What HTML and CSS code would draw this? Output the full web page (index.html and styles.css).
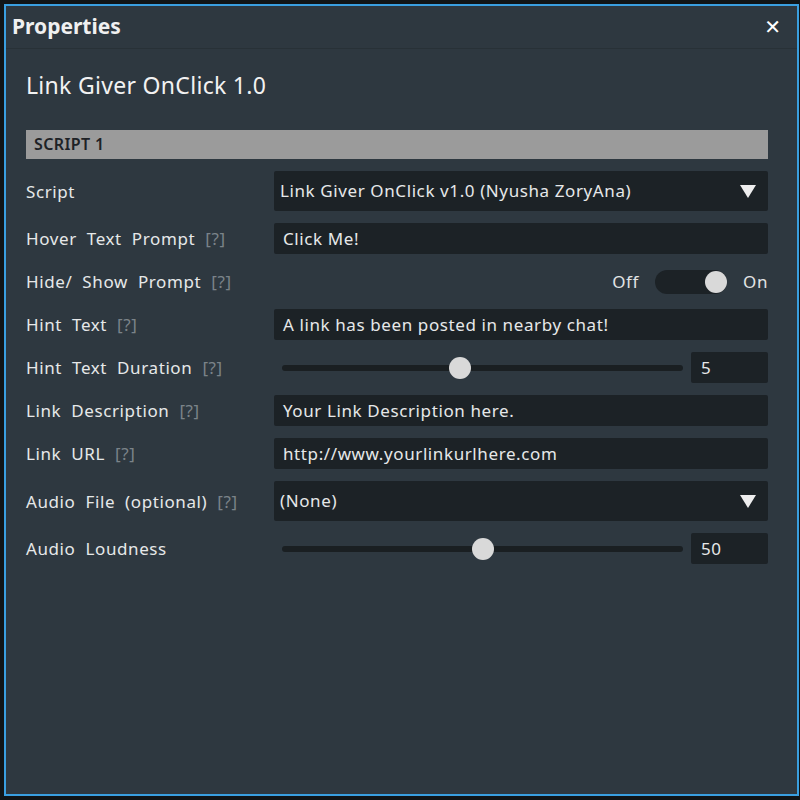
FILE: index.html
```html
<!DOCTYPE html>
<html lang="en">
<head>
    <meta charset="UTF-8">
    <title>Properties</title>
    <link rel="stylesheet" href="styles.css">
</head>
<body>
    <div class="window">
        <div class="title-bar">
            <span class="title">Properties</span>
            <span class="close">&#x2715;</span>
        </div>
        <div class="content">
            <h1 class="object-name">Link Giver OnClick 1.0</h1>
            <div class="section-head">SCRIPT 1</div>

            <div class="props">
                <div class="label">Script</div>
                <div class="field dropdown tall">
                    <span>Link Giver OnClick v1.0 (Nyusha ZoryAna)</span>
                    <span class="arrow"></span>
                </div>

                <div class="label">Hover Text Prompt <span class="help">[?]</span></div>
                <div class="field">Click Me!</div>

                <div class="label">Hide/ Show Prompt <span class="help">[?]</span></div>
                <div class="toggle-row">
                    <span>Off</span>
                    <div class="toggle"><div class="toggle-knob"></div></div>
                    <span>On</span>
                </div>

                <div class="label">Hint Text <span class="help">[?]</span></div>
                <div class="field">A link has been posted in nearby chat!</div>

                <div class="label">Hint Text Duration <span class="help">[?]</span></div>
                <div class="slider-row">
                    <div class="slider">
                        <div class="track"></div>
                        <div class="knob" style="left: 44.4%"></div>
                    </div>
                    <div class="field value">5</div>
                </div>

                <div class="label">Link Description <span class="help">[?]</span></div>
                <div class="field">Your Link Description here.</div>

                <div class="label">Link URL <span class="help">[?]</span></div>
                <div class="field">http://www.yourlinkurlhere.com</div>

                <div class="label">Audio File (optional) <span class="help">[?]</span></div>
                <div class="field dropdown tall">
                    <span>(None)</span>
                    <span class="arrow"></span>
                </div>

                <div class="label">Audio Loudness</div>
                <div class="slider-row">
                    <div class="slider">
                        <div class="track"></div>
                        <div class="knob" style="left: 50%"></div>
                    </div>
                    <div class="field value">50</div>
                </div>
            </div>
        </div>
    </div>
</body>
</html>
```

FILE: styles.css
```css
html, body {
    height: 100%;
}
body {
    margin: 0;
    background-color: #111517;
    font-family: "Noto Sans", "DejaVu Sans", sans-serif;
    color: #e2e4e5;
    box-sizing: border-box;
    padding: 4px 1px 4px 4px;
}
.window {
    height: 100%;
    box-sizing: border-box;
    border: 2px solid #3a9fe0;
    background-color: #2e3840;
    display: flex;
    flex-direction: column;
}
.title-bar {
    display: flex;
    justify-content: space-between;
    align-items: center;
    height: 40px;
    padding: 0 16px 2px 6px;
    border-bottom: 1px solid #283137;
}
.title {
    font-size: 21px;
    font-weight: bold;
    color: #f0f0f0;
}
.close {
    font-size: 20px;
    font-weight: bold;
    color: #ffffff;
}
.content {
    padding: 0 29px 0 20px;
}
.object-name {
    margin: 20px 0 29px 0;
    font-size: 23px;
    font-weight: normal;
    letter-spacing: 0.3px;
    color: #f2f2f2;
    line-height: 32px;
}
.section-head {
    height: 29px;
    line-height: 29px;
    background-color: #9b9b9b;
    color: #1e2226;
    font-size: 16px;
    font-weight: 600;
    letter-spacing: 0.4px;
    padding-left: 8px;
    margin-bottom: 12px;
}
.props {
    display: grid;
    grid-template-columns: 248px 1fr;
    row-gap: 12px;
    align-items: center;
}
.label {
    font-size: 17px;
    letter-spacing: 0.6px;
    word-spacing: 5px;
    color: #e6e8e9;
}
.help {
    color: #7b8389;
}
.field {
    height: 31px;
    line-height: 31px;
    background-color: #1c2226;
    border-radius: 2px;
    padding-left: 9px;
    font-size: 17px;
    letter-spacing: 0.6px;
    color: #e6e8e9;
}
.tall {
    height: 40px;
    line-height: 40px;
}
.dropdown {
    display: flex;
    justify-content: space-between;
    align-items: center;
    padding-left: 6px;
    padding-right: 12px;
}
.arrow {
    width: 0;
    height: 0;
    border-left: 8px solid transparent;
    border-right: 8px solid transparent;
    border-top: 13px solid #eeeeee;
}
.toggle-row {
    height: 31px;
    display: flex;
    justify-content: flex-end;
    align-items: center;
    gap: 16px;
    font-size: 17px;
    letter-spacing: 0.6px;
}
.toggle {
    position: relative;
    width: 72px;
    height: 24px;
    border-radius: 12px;
    background-color: #1c2226;
}
.toggle-knob {
    position: absolute;
    right: 0;
    top: 1px;
    width: 22px;
    height: 22px;
    border-radius: 50%;
    background-color: #d9d9d9;
}
.slider-row {
    display: flex;
    align-items: center;
    gap: 8px;
}
.slider {
    position: relative;
    flex: 1;
    height: 31px;
    margin-left: 8px;
}
.track {
    position: absolute;
    left: 0;
    right: 0;
    top: 13px;
    height: 6px;
    border-radius: 3px;
    background-color: #1a1f22;
}
.knob {
    position: absolute;
    top: 5px;
    width: 22px;
    height: 22px;
    border-radius: 50%;
    background-color: #d9d9d9;
    transform: translateX(-11px);
}
.value {
    width: 77px;
    box-sizing: border-box;
    padding-left: 10px;
}
```
